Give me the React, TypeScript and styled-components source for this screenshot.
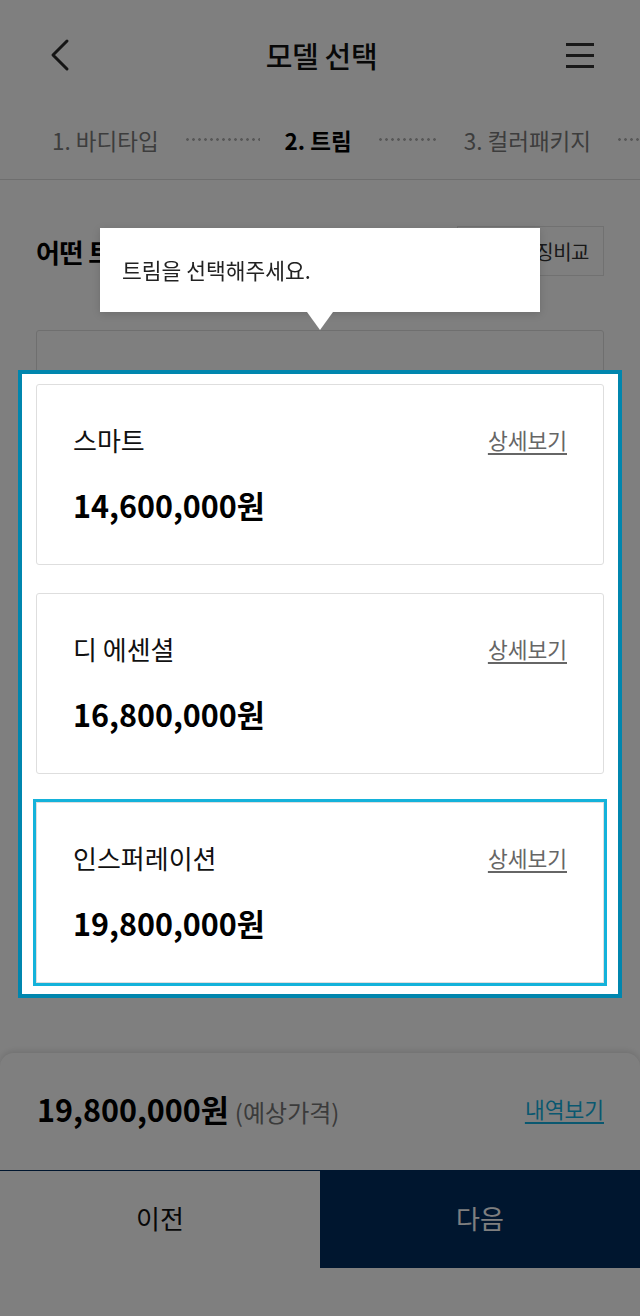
import React from 'react';
import styled, { createGlobalStyle, css } from 'styled-components';

const GlobalStyle = createGlobalStyle`
  * { box-sizing: border-box; }
  body {
    margin: 0;
    background: #fff;
    font-family: "Noto Sans CJK KR", "Noto Sans", sans-serif;
    color: #111;
  }
`;

const Page = styled.div`
  position: relative;
  display: flex;
  flex-direction: column;
  min-height: 1316px;
  background: #fff;
`;

const Header = styled.header`
  display: grid;
  grid-template-columns: 1fr auto 1fr;
  align-items: center;
  height: 110px;
  padding: 0 45px 0 48px;
`;

const IconButton = styled.button<{ $right?: boolean }>`
  appearance: none;
  border: 0;
  background: none;
  padding: 0;
  display: flex;
  justify-self: ${p => (p.$right ? 'end' : 'start')};
`;

const Title = styled.h1`
  margin: 0;
  font-size: 29px;
  font-weight: 500;
  line-height: 36px;
  color: #111;
  letter-spacing: -0.3px;
`;

const StepBar = styled.nav`
  display: flex;
  align-items: center;
  height: 70px;
  padding: 0 0 10px 52px;
  border-bottom: 1px solid #dcdcdc;
  overflow: hidden;
  white-space: nowrap;
`;

const Step = styled.span<{ $active?: boolean }>`
  font-size: 22.5px;
  line-height: 30px;
  color: #7a7a7a;
  ${p =>
    p.$active &&
    css`
      color: #000;
      font-weight: 700;
    `}
`;

const Dots = styled.span<{ $width: number }>`
  flex: none;
  width: ${p => p.$width}px;
  height: 3px;
  margin: 0 25px 0 27px;
  background-image: radial-gradient(circle at 1.5px 1.5px, #b0b0b0 1.1px, transparent 1.6px);
  background-size: 6px 3px;
  background-repeat: repeat-x;
`;

const Main = styled.main`
  padding: 0 36px;
`;

const TitleRow = styled.div`
  display: flex;
  align-items: center;
  justify-content: space-between;
  margin-top: 46px;
  height: 50px;
`;

const Heading = styled.h2`
  margin: 0;
  font-size: 26px;
  font-weight: 700;
  letter-spacing: -0.5px;
  color: #000;
`;

const CompareButton = styled.button`
  appearance: none;
  height: 50px;
  padding: 0 14px 0 20px;
  border: 1px solid #e2e2e2;
  background: #fff;
  font-family: inherit;
  font-size: 20px;
  color: #333;
  letter-spacing: -0.5px;
`;

const CardList = styled.div<{ $top?: number }>`
  display: flex;
  flex-direction: column;
  gap: 28px;
  margin-top: ${p => p.$top ?? 0}px;
`;

const CardBox = styled.div<{ $selected?: boolean }>`
  height: 181px;
  padding: 38px 36px 38px;
  border: 1px solid #dedede;
  border-radius: 3px;
  background: #fff;
  ${p =>
    p.$selected &&
    css`
      box-shadow: 0 0 0 3px #14b2da;
      border-radius: 0;
    `}
`;

const CardTop = styled.div`
  display: flex;
  align-items: center;
  justify-content: space-between;
`;

const CardName = styled.span`
  font-size: 26px;
  line-height: 34px;
  color: #111;
`;

const DetailLink = styled.a`
  font-size: 21.5px;
  line-height: 28px;
  color: #666;
  text-decoration: underline;
  text-underline-offset: 4px;
`;

const Price = styled.div`
  margin-top: 28px;
  font-size: 30.5px;
  line-height: 40px;
  font-weight: 700;
  color: #000;
`;

const Footer = styled.footer`
  margin-top: auto;
  padding-bottom: 48px;
`;

const PricePanel = styled.div`
  display: flex;
  align-items: center;
  justify-content: space-between;
  height: 117px;
  padding: 0 36px 6px 37px;
  border-radius: 14px 14px 0 0;
  background: #fff;
  box-shadow: 0 -2px 6px rgba(0, 0, 0, 0.12);
`;

const TotalPrice = styled.div`
  display: flex;
  align-items: baseline;
  gap: 6px;
`;

const TotalValue = styled.span`
  font-size: 30.5px;
  font-weight: 700;
  color: #000;
`;

const TotalNote = styled.span`
  font-size: 24px;
  color: #777;
`;

const HistoryLink = styled.a`
  font-size: 21.5px;
  color: #14b0e0;
  text-decoration: underline;
  text-underline-offset: 4px;
`;

const ButtonRow = styled.div`
  display: grid;
  grid-template-columns: 1fr 1fr;
  height: 98px;
`;

const NavButton = styled.button<{ $primary?: boolean }>`
  appearance: none;
  border: 0;
  border-top: 1px solid #002c5f;
  padding: 0 0 4px;
  font-family: inherit;
  font-size: 26px;
  background: ${p => (p.$primary ? '#002c5f' : '#fff')};
  color: ${p => (p.$primary ? '#fff' : '#111')};
`;

const Overlay = styled.div`
  position: fixed;
  inset: 0;
  background: rgba(0, 0, 0, 0.5);
  z-index: 10;
`;

const Highlight = styled.div`
  position: absolute;
  top: 370px;
  left: 18px;
  width: 604px;
  height: 628px;
  padding: 10px 14px;
  border: 4px solid #0086ae;
  background: #fff;
  z-index: 20;
`;

const Tooltip = styled.div`
  position: absolute;
  top: 228px;
  left: 100px;
  width: 440px;
  height: 84px;
  display: flex;
  align-items: center;
  padding: 0 22px 2px;
  background: #fff;
  box-shadow: 0 2px 8px rgba(0, 0, 0, 0.15);
  font-size: 21.5px;
  color: #222;
  z-index: 20;

  &::after {
    content: '';
    position: absolute;
    left: 50%;
    top: 100%;
    margin-left: -13px;
    border-left: 13px solid transparent;
    border-right: 13px solid transparent;
    border-top: 18px solid #fff;
  }
`;

const trims = [
  { name: '스마트', price: '14,600,000원' },
  { name: '디 에센셜', price: '16,800,000원' },
  { name: '인스퍼레이션', price: '19,800,000원' }
];

const selectedIndex = 2;

const TrimCard = ({ name, price, selected }: { name: string; price: string; selected?: boolean }) => (
  <CardBox $selected={selected}>
    <CardTop>
      <CardName>{name}</CardName>
      <DetailLink>상세보기</DetailLink>
    </CardTop>
    <Price>{price}</Price>
  </CardBox>
);

export default function App() {
  return (
    <Page>
      <GlobalStyle />
      <Header>
        <IconButton aria-label="뒤로">
          <svg width="24" height="34" viewBox="0 0 24 34" fill="none">
            <path d="M19 3 L5 17 L19 31" stroke="#2a2a2a" strokeWidth="3" strokeLinecap="round" strokeLinejoin="round" />
          </svg>
        </IconButton>
        <Title>모델 선택</Title>
        <IconButton $right aria-label="메뉴">
          <svg width="30" height="28" viewBox="0 0 30 28">
            <rect x="1" y="2" width="28" height="3" fill="#333" />
            <rect x="1" y="13" width="28" height="3" fill="#333" />
            <rect x="1" y="24" width="28" height="3" fill="#333" />
          </svg>
        </IconButton>
      </Header>

      <StepBar>
        <Step>1. 바디타입</Step>
        <Dots $width={74} />
        <Step $active>2. 트림</Step>
        <Dots $width={60} />
        <Step>3. 컬러패키지</Step>
        <Dots $width={60} />
      </StepBar>

      <Main>
        <TitleRow>
          <Heading>어떤 트림을 원하세요?</Heading>
          <CompareButton>트림 특징비교</CompareButton>
        </TitleRow>
        {/* the cards themselves are shown by the coach mark above the overlay */}
        <CardList $top={54} aria-hidden>
          {trims.map(t => (
            <CardBox key={t.name} />
          ))}
        </CardList>
      </Main>

      <Footer>
        <PricePanel>
          <TotalPrice>
            <TotalValue>19,800,000원</TotalValue>
            <TotalNote>(예상가격)</TotalNote>
          </TotalPrice>
          <HistoryLink>내역보기</HistoryLink>
        </PricePanel>
        <ButtonRow>
          <NavButton>이전</NavButton>
          <NavButton $primary>다음</NavButton>
        </ButtonRow>
      </Footer>

      <Overlay />
      <Tooltip>트림을 선택해주세요.</Tooltip>
      <Highlight>
        <CardList>
          {trims.map((t, i) => (
            <TrimCard key={t.name} name={t.name} price={t.price} selected={i === selectedIndex} />
          ))}
        </CardList>
      </Highlight>
    </Page>
  );
}
